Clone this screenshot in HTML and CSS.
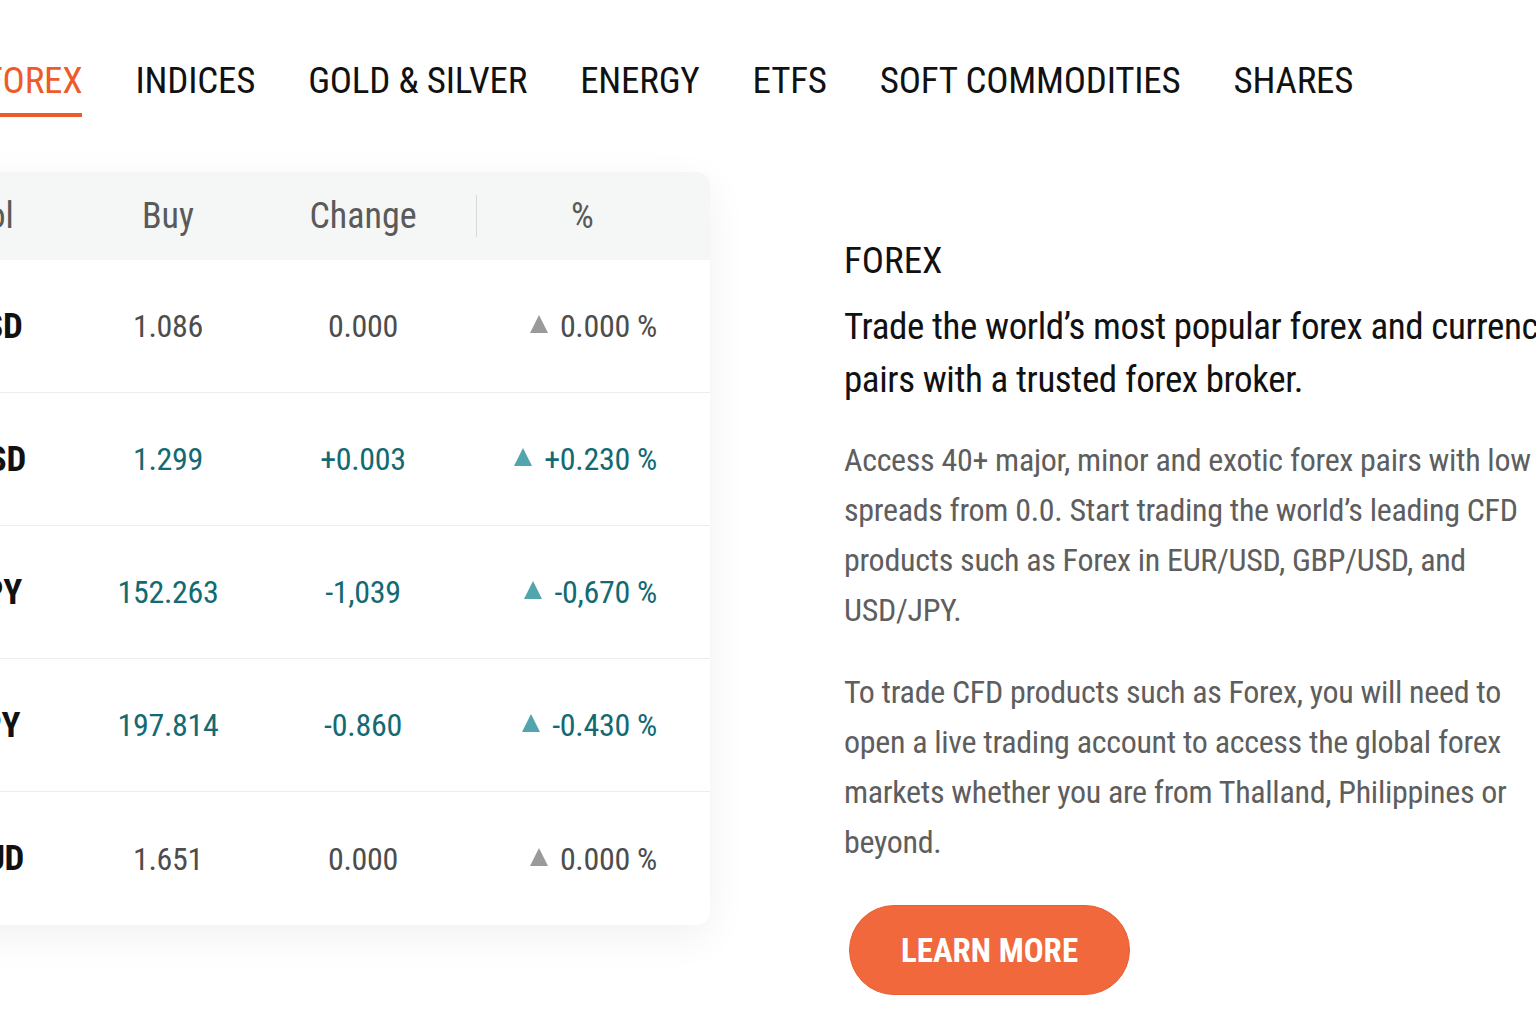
FILE: index.html
```html
<!DOCTYPE html>
<html lang="en">
<head>
<meta charset="utf-8">
<title>Markets - Forex</title>
<link rel="stylesheet" href="styles.css">
</head>
<body>
<div class="page">
  <nav class="tabs">
    <a class="tab active">FOREX</a>
    <a class="tab">INDICES</a>
    <a class="tab">GOLD &amp; SILVER</a>
    <a class="tab">ENERGY</a>
    <a class="tab">ETFS</a>
    <a class="tab">SOFT COMMODITIES</a>
    <a class="tab">SHARES</a>
  </nav>
  <section class="content">
    <div class="card">
      <div class="row head">
        <div class="cell sym">Symbol</div>
        <div class="cell c">Buy</div>
        <div class="cell c">Change</div>
        <div class="cell pct-head">%</div>
      </div>
      <div class="row">
        <div class="cell sym">EURUSD</div>
        <div class="cell c">1.086</div>
        <div class="cell c">0.000</div>
        <div class="cell pct"><span class="tri"></span>0.000 %</div>
      </div>
      <div class="row up">
        <div class="cell sym">GBPUSD</div>
        <div class="cell c">1.299</div>
        <div class="cell c">+0.003</div>
        <div class="cell pct"><span class="tri"></span>+0.230 %</div>
      </div>
      <div class="row up">
        <div class="cell sym">USDJPY</div>
        <div class="cell c">152.263</div>
        <div class="cell c">-1,039</div>
        <div class="cell pct"><span class="tri"></span>-0,670 %</div>
      </div>
      <div class="row up">
        <div class="cell sym">GBPJPY</div>
        <div class="cell c">197.814</div>
        <div class="cell c">-0.860</div>
        <div class="cell pct"><span class="tri"></span>-0.430 %</div>
      </div>
      <div class="row last">
        <div class="cell sym">EURAUD</div>
        <div class="cell c">1.651</div>
        <div class="cell c">0.000</div>
        <div class="cell pct"><span class="tri"></span>0.000 %</div>
      </div>
    </div>
    <div class="info">
      <h2 class="info-title">FOREX</h2>
      <p class="lead">Trade the world’s most popular forex and currency<br>pairs with a trusted forex broker.</p>
      <p class="body">Access 40+ major, minor and exotic forex pairs with low<br>spreads from 0.0. Start trading the world’s leading CFD<br>products such as Forex in EUR/USD, GBP/USD, and<br>USD/JPY.</p>
      <p class="body">To trade CFD products such as Forex, you will need to<br>open a live trading account to access the global forex<br>markets whether you are from Thalland, Philippines or<br>beyond.</p>
      <a class="btn">LEARN MORE</a>
    </div>
  </section>
</div>
</body>
</html>
```
FILE: styles.css
```css
html, body {
  margin: 0;
  padding: 0;
  background: #ffffff;
}
body {
  width: 1536px;
  height: 1024px;
  overflow: hidden;
  font-family: "Liberation Sans Narrow", "Roboto Condensed", Roboto, sans-serif;
  color: #111;
}
.page {
  margin-left: -124px;
  width: 1900px;
}
.tabs {
  display: flex;
  gap: 53px;
  padding: 62px 0 0 109px;
}
.tab {
  font-size: 37px;
  line-height: 37px;
  letter-spacing: -0.2px;
  color: #111;
  padding-bottom: 14px;
  border-bottom: 4px solid transparent;
  white-space: nowrap;
}
.tab.active {
  color: #ee5b2a;
  border-bottom-color: #ee5b2a;
}
.content {
  display: flex;
  align-items: flex-start;
  margin-top: 55px;
}
.card {
  width: 834px;
  box-sizing: border-box;
  background: #fff;
  border-radius: 0 14px 14px 0;
  box-shadow: 0 12px 40px rgba(0, 0, 0, 0.06);
  overflow: hidden;
  flex: none;
}
.row {
  display: grid;
  grid-template-columns: 177px 164px 226px 212px;
  align-items: center;
  padding: 0 22px 0 33px;
  height: 132px;
  border-bottom: 1px solid #ececec;
  font-size: 32px;
  letter-spacing: -0.3px;
  color: #4d4d4d;
}
.row.last {
  height: 133px;
  border-bottom: none;
}
.row.head {
  height: 88px;
  background: #f5f7f7;
  border-bottom: none;
  font-size: 36px;
  letter-spacing: 0;
  color: #5a5a5a;
}
.cell.sym {
  font-weight: 700;
  font-size: 35px;
  color: #111;
}
.row.head .cell.sym {
  font-weight: 400;
  font-size: 36px;
  color: #5a5a5a;
}
.cell.c {
  text-align: center;
}
.pct-head {
  height: 42px;
  border-left: 1px solid #d6d9d9;
  display: flex;
  align-items: center;
  justify-content: center;
}
.pct {
  display: flex;
  align-items: center;
  justify-content: flex-end;
  gap: 12px;
  padding-right: 31px;
}
.tri {
  width: 0;
  height: 0;
  border-left: 9px solid transparent;
  border-right: 9px solid transparent;
  border-bottom: 18px solid #9a9a9a;
  margin-top: -4px;
}
.row.up {
  color: #136a73;
}
.row.up .cell.sym {
  color: #111;
}
.row.up .tri {
  border-bottom-color: #53a5ad;
}
.info {
  margin-left: 134px;
  padding-top: 69px;
  white-space: nowrap;
}
.info-title {
  margin: 0;
  font-size: 37px;
  line-height: 40px;
  font-weight: 400;
  color: #111;
}
.lead {
  margin: 19px 0 0;
  font-size: 37px;
  line-height: 53px;
  letter-spacing: -0.4px;
  color: #111;
}
.body {
  margin: 29px 0 0;
  font-size: 32px;
  line-height: 50px;
  letter-spacing: -0.3px;
  color: #5e5e5e;
}
.body + .body {
  margin-top: 32px;
}
.btn {
  display: flex;
  align-items: center;
  justify-content: center;
  width: 281px;
  height: 90px;
  box-sizing: border-box;
  margin: 38px 0 0 5px;
  border-radius: 45px;
  background: #f0683b;
  border: 1px solid #e85f31;
  color: #fff;
  font-weight: 700;
  font-size: 33px;
}
```
